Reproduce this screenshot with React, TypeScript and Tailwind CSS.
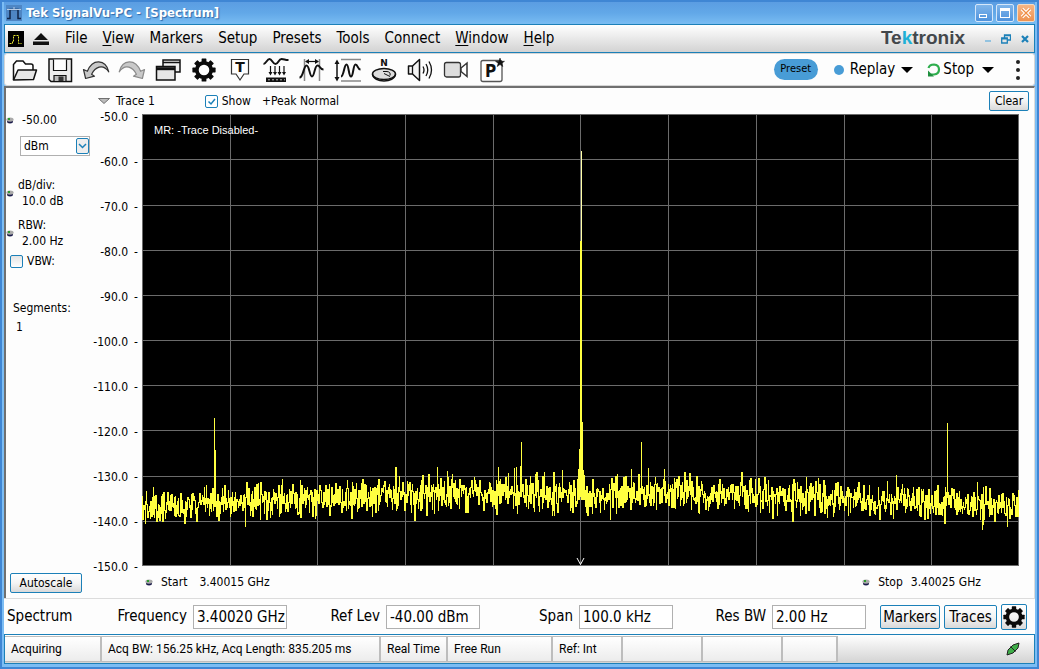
import React from 'react';

const FONT = "font-['DejaVu_Sans_Condensed','DejaVu_Sans',sans-serif]";
const XP_BUTTON =
    'rounded-[2px] border border-[#1c80b8] bg-gradient-to-b from-white via-[#f4f4f4] to-[#d9d9d9] text-black';

/* ---------- Trace data ---------- */

const PLOT_W = 877;
const PLOT_H = 452;
const V_LINES = [88, 175, 263, 351, 438, 526, 614, 702, 789];
const H_LINES = [45, 91, 136, 181, 226, 271, 316, 362, 407];
const AXIS = ['-50.0', '-60.0', '-70.0', '-80.0', '-90.0', '-100.0', '-110.0', '-120.0', '-130.0', '-140.0', '-150.0'];

// column -> top of the spur
const SPURS: Record<number, number> = {
    72: 304,
    73: 336,
    295: 353,
    305: 357,
    310: 360,
    356: 353,
    372: 354,
    378: 352,
    379: 328,
    402: 358,
    436: 355,
    437: 335,
    438: 127,
    439: 37,
    440: 308,
    441: 356,
    442: 361,
    475: 360,
    499: 328,
    506: 354,
    522: 355,
    805: 309,
};

const floorAt = (x: number) => {
    const d = Math.abs(x - 438) / 438;
    const dip = 5 * Math.exp(-((x - 438) ** 2) / 2200);
    return 377 + 16 * Math.pow(d, 1.7) + dip;
};

const buildTrace = () => {
    let seed = 20417;
    const rand = () => {
        seed = (seed * 1664525 + 1013904223) % 4294967296;
        return seed / 4294967296;
    };
    const sample = (x: number) => {
        const g = rand() + rand() + rand() + rand() - 2;
        return floorAt(x) + g * 15;
    };
    let last = floorAt(0);
    let d = '';
    for (let x = 0; x < PLOT_W; x++) {
        const a = sample(x);
        const b = sample(x);
        let top = Math.round(Math.min(a, b, last));
        let bottom = Math.round(Math.max(a, b, last)) + 1;
        if (SPURS[x] !== undefined) {
            top = SPURS[x];
            bottom = Math.min(bottom, Math.round(floorAt(x)) + 4);
        }
        d += `M${x + 0.5} ${top}V${bottom}`;
        last = b;
    }
    return d;
};

const TRACE = buildTrace();

/* ---------- Icons ---------- */

const Icon: React.FC<{ children: React.ReactNode }> = ({ children }) => (
    <svg viewBox="0 0 28 28" className="size-7" fill="none" stroke="#111" strokeWidth="1.5">
        {children}
    </svg>
);

const GearShape = () => (
    <g stroke="none" fill="#0a0a0a">
        {[0, 45, 90, 135, 180, 225, 270, 315].map((a) => (
            <rect key={a} x="11.6" y="2.4" width="4.8" height="5" rx="0.6" transform={`rotate(${a} 14 14)`} />
        ))}
        <circle cx="14" cy="14" r="7.2" fill="none" stroke="#0a0a0a" strokeWidth="3.8" />
    </g>
);

const ArrowShape = ({ dark }: { dark: string }) => (
    <path
        d="M1.5 13.5L3.6 22.5 12.5 20.2 9.6 18.2C13 11.5 20.5 7 26.8 15.8 23.5 3 10.5 2.4 5.4 15.3z"
        fill="#c9c9c9"
        stroke={dark}
        strokeWidth="1.2"
        strokeLinejoin="round"
    />
);

const TOOLS: { name: string; art: React.ReactNode }[] = [
    {
        name: 'Open',
        art: (
            <>
                <path d="M3.5 24V8.5L6.5 5H13l2.5 3H21q2 0 2 2v4" fill="#fff" />
                <path d="M3.5 24L8 14h18.5L23.5 23.5z" fill="#e6e6e6" strokeLinejoin="round" />
            </>
        ),
    },
    {
        name: 'Save',
        art: (
            <>
                <path d="M3 3h22.5v22.5H5L3 23.5z" fill="#ececec" strokeWidth="1.5" />
                <path d="M7.5 3.5v11h13v-11" fill="#fff" strokeWidth="1.2" />
                <path d="M8 25v-5.5h12V25" fill="#bbb" strokeWidth="1.2" />
                <path d="M12.5 20.5h5V25h-5z" fill="#333" stroke="none" />
            </>
        ),
    },
    { name: 'Undo', art: <ArrowShape dark="#333" /> },
    {
        name: 'Redo',
        art: (
            <g transform="translate(28 0) scale(-1 1)">
                <ArrowShape dark="#8a8a8a" />
            </g>
        ),
    },
    {
        name: 'Windows',
        art: (
            <>
                <path d="M9 4h17v12H9z" fill="#eee" />
                <path d="M9 6.5h17" />
                <path d="M2.5 10.5h18.5v13.5H2.5z" fill="#e6e6e6" />
                <path d="M2.5 12.7h18.5" strokeWidth="3" />
            </>
        ),
    },
    { name: 'Settings', art: <GearShape /> },
    {
        name: 'Trigger',
        art: (
            <>
                <path d="M5.5 18V3.5h17V18h-4.5l-4 6-4-6z" fill="#fff" stroke="#333" strokeWidth="1.2" />
                <text x="14" y="15.5" textAnchor="middle" fontSize="14" fontWeight="700" fill="#111" stroke="none" fontFamily="DejaVu Sans">
                    T
                </text>
            </>
        ),
    },
    {
        name: 'Acquire',
        art: (
            <>
                <path d="M1.5 8C4 8 5 3 7.500 3s3 5 6 5 3-5 6-5 3 1 7 1" strokeWidth="2" />
                <path d="M8.5 10v8M13 10v8M17.5 10v8M22 10v8" strokeWidth="1.2" />
                <path d="M6.5 16h4l-2 3.500zM11 16h4l-2 3.500zM15.5 16h4l-2 3.500zM20 16h4l-2 3.500z" fill="#111" stroke="none" />
                <path d="M4 21.5h20V26H4z" fill="#111" stroke="none" />
                <path d="M6 23.8h17" stroke="#bbb" strokeDasharray="2 2" strokeWidth="1" />
            </>
        ),
    },
    {
        name: 'Horizontal',
        art: (
            <>
                <path d="M6.5 3v22M21.5 3v22" stroke="#888" />
                <path d="M8 5.5h12" strokeWidth="1.2" />
                <path d="M7 5.5l4-2.500v5zM21 5.5l-4-2.500v5z" fill="#111" stroke="none" />
                <path d="M1.5 21.5c4 0 4-12 7-12s3 11 5.500 11 2.500-11 5.500-11 2 4 6 4" strokeWidth="2" />
            </>
        ),
    },
    {
        name: 'Vertical',
        art: (
            <>
                <path d="M7 3.5h20M7 25h20" stroke="#888" />
                <path d="M3 6v17" />
                <path d="M3 3.5L.5 8h5zM3 25.5L.5 21h5z" fill="#111" stroke="none" />
                <path d="M7 20.5c3 0 3-12 5.500-12s2 12 4.500 12 2-12 4.500-12 2 5 5 5" strokeWidth="2" />
            </>
        ),
    },
    {
        name: 'Heading',
        art: (
            <>
                <ellipse cx="14" cy="18" rx="11.5" ry="5.5" fill="#ddd" />
                <path d="M2.5 18.5c1 8.500 22 8.500 23 0" />
                <path d="M14 17.5l6 3M13 15.500h4q4 .5 3 4" strokeWidth="1" />
                <text x="14" y="10" textAnchor="middle" fontSize="9" fontWeight="700" fill="#111" stroke="none" fontFamily="DejaVu Sans">
                    N
                </text>
            </>
        ),
    },
    {
        name: 'Audio',
        art: (
            <>
                <path d="M2.5 10h4l7-6.500v21L6.5 18h-4z" fill="#f4f4f4" strokeLinejoin="round" />
                <path d="M6.5 10v8M17 10.5q2 3.500 0 7M20 8q3.500 6 0 12M23 5.5q5 8.500 0 17" strokeWidth="1.3" />
            </>
        ),
    },
    {
        name: 'Record',
        art: (
            <>
                <rect x="2.5" y="6.5" width="16" height="14.5" rx="2" fill="#ddd" stroke="#333" strokeWidth="1.3" />
                <path d="M19 12l6-5v13.500l-6-5z" fill="#fff" stroke="#333" />
            </>
        ),
    },
    {
        name: 'Favorite preset',
        art: (
            <>
                <rect x="3" y="4.5" width="21" height="21" rx="2" fill="#fff" stroke="#555" strokeWidth="1.3" />
                <text x="12.5" y="21" textAnchor="middle" fontSize="17" fontWeight="700" fill="#111" stroke="none" fontFamily="DejaVu Sans Condensed">
                    P
                </text>
                <path d="M22 2l1.1 3.300h3.400l-2.700 2 1 3.300-2.800-2-2.800 2 1-3.300-2.700-2h3.400z" fill="#111" stroke="#111" strokeWidth=".5" />
            </>
        ),
    },
];

const Knob = () => (
    <svg viewBox="0 0 8 8" className="size-2 shrink-0">
        <ellipse cx="4" cy="5.3" rx="3" ry="2.2" fill="#1b1b4a" />
        <ellipse cx="4" cy="3.6" rx="3.6" ry="2.2" fill="#aaa" />
        <path d="M2 2h2v2H2z" fill="#2d9a2d" />
    </svg>
);

const Caret = () => (
    <svg viewBox="0 0 12 6" className="h-1.5 w-3">
        <path d="M0 0h12L6 6z" fill="#000" />
    </svg>
);

/* ---------- Window parts ---------- */

const TitleBar = () => (
    <header className="flex h-[22px] items-center bg-gradient-to-b from-[#5b9de2] via-[#62a8e8] to-[#79bcf2] pl-0.5">
        <svg viewBox="0 0 16 16" className="size-4" fill="none">
            <rect width="16" height="16" fill="#4e86c4" />
            <path d="M1 13.5h3v-9h8v9h3" stroke="#0f2548" strokeWidth="1.5" />
            <path d="M1 4.5h14M8 2v3" stroke="#b9cde5" />
        </svg>
        <h1 className="ml-1 flex-1 text-[13px] font-bold text-white [text-shadow:1px_1px_1px_#2f68a8]">
            Tek SignalVu-PC - [Spectrum]
        </h1>
        <div className="flex gap-[3px]">
            <button aria-label="Minimize" className="flex h-[18px] w-[18px] items-end rounded-[2px] border border-[#d5e7fa] bg-gradient-to-b from-[#7fb5ea] to-[#4f93dd] p-[3px]">
                <span className="h-1 w-2 border border-white" />
            </button>
            <button aria-label="Maximize" className="flex h-[18px] w-[18px] items-center justify-center rounded-[2px] border border-[#d5e7fa] bg-gradient-to-b from-[#7fb5ea] to-[#4f93dd]">
                <span className="h-2.5 w-2.5 border border-t-[3px] border-white" />
            </button>
            <button aria-label="Close" className="flex h-[18px] w-[18px] items-center justify-center rounded-[2px] border border-[#f3dcc6] bg-gradient-to-b from-[#f6b584] to-[#ee9250]">
                <svg viewBox="0 0 12 12" className="size-3">
                    <path d="M2 2l8 8M10 2l-8 8" stroke="#fff" strokeWidth="3.5" />
                    <path d="M2 2l8 8M10 2l-8 8" stroke="#f08a40" strokeWidth="1.2" />
                </svg>
            </button>
        </div>
    </header>
);

const MENU = [
    { text: 'File' },
    { text: 'View', key: true },
    { text: 'Markers' },
    { text: 'Setup' },
    { text: 'Presets' },
    { text: 'Tools' },
    { text: 'Connect' },
    { text: 'Window', key: true },
    { text: 'Help', key: true },
];

const MenuBar = () => (
    <nav className="flex h-[29px] items-center border border-[#1c80b8] bg-gradient-to-b from-white to-[#d3d3d3] pr-[5px] pl-[3px]">
        <svg viewBox="0 0 16 16" className="size-4" fill="none">
            <rect width="16" height="16" fill="#000" />
            <path d="M1.5 12.5h3v-2h1v-6h5v8h3" stroke="#e6e632" strokeDasharray="2 1" />
        </svg>
        <svg viewBox="0 0 16 12" className="ml-[9px] h-3 w-4">
            <path d="M8 0l7 7H1zM0 8.5h16V12H0z" fill="#111" />
        </svg>
        <div className="ml-4 flex gap-[15px] text-[15px]">
            {MENU.map((m) => (
                <button key={m.text}>
                    {m.key ? <span className="underline underline-offset-2">{m.text[0]}</span> : m.text[0]}
                    {m.text.slice(1)}
                </button>
            ))}
        </div>
        <div className="ml-auto font-['Liberation_Sans',sans-serif] text-[19px] font-bold text-[#43474b]">
            Te<span className="text-[#1fb0d6]">k</span>tronix
        </div>
        <div className="ml-5 flex items-center gap-2.5 text-[#1c80b8]">
            <button aria-label="Minimize document" className="mt-1 h-0.5 w-1.5 bg-[#93c3e0]" />
            <button aria-label="Restore document">
                <svg viewBox="0 0 10 10" className="size-2.5" fill="none" stroke="currentColor">
                    <path d="M3.5 4V1h6v5h-3M3.5 1.5h6" strokeWidth="1.3" />
                    <path d="M.7 4h5.6v5H.7zM.7 4.800h5.600" strokeWidth="1.3" />
                </svg>
            </button>
            <button aria-label="Close document">
                <svg viewBox="0 0 8 8" className="size-2" stroke="currentColor" strokeWidth="2.2">
                    <path d="M1 1l6 6M7 1L1 7" />
                </svg>
            </button>
        </div>
    </nav>
);

const Toolbar = () => (
    <div className="flex h-[33px] items-center rounded-[3px] border border-[#d5d5d5] bg-[#fdfdfd] pl-px">
        {TOOLS.map((t) => (
            <button key={t.name} aria-label={t.name} className="flex w-9 shrink-0 justify-center">
                <Icon>{t.art}</Icon>
            </button>
        ))}
        <div className="ml-auto flex items-center pr-3.5 text-[15px]">
            <button className="h-[21px] w-11 rounded-full bg-[#489cd6] text-[11px]">Preset</button>
            <button className="ml-4 flex items-center">
                <span className="mr-1.5 size-2.5 rounded-full bg-[#489cd6]" />
                Replay
                <span className="ml-1.5">
                    <Caret />
                </span>
            </button>
            <button className="ml-3.5 flex items-center">
                <svg viewBox="0 0 14 14" className="mr-0.5 size-3.5" fill="none">
                    <path d="M1.500 5Q2.500 1.500 7 1.500q5 .5 5 5T7 11.500H4" stroke="#2fae4e" strokeWidth="2.2" />
                    <path d="M1 7.500v6h6z" fill="#1e8f3e" />
                </svg>
                Stop
                <span className="ml-2">
                    <Caret />
                </span>
            </button>
            <button aria-label="More" className="ml-[22px] flex flex-col gap-1">
                <span className="size-1 rounded-full bg-[#222]" />
                <span className="size-1 rounded-full bg-[#222]" />
                <span className="size-1 rounded-full bg-[#222]" />
            </button>
        </div>
    </div>
);

const Sidebar = () => (
    <aside className="flex w-[84px] shrink-0 flex-col">
        <div className="mt-6 flex h-4 items-center gap-2">
            <Knob />
            <span>-50.00</span>
        </div>
        <div className="relative mt-2 ml-3.5 h-5 w-[70px]">
            <select aria-label="Units" defaultValue="dBm" className="h-full w-full appearance-none border border-[#b0b0b0] bg-white pl-[3px]">
                <option>dBm</option>
            </select>
            <svg viewBox="0 0 13 16" className="pointer-events-none absolute top-0.5 right-px h-4 w-[13px]" fill="none">
                <rect x=".5" y=".5" width="12" height="15" rx="1.5" fill="#eee" stroke="#1c80b8" />
                <path d="M3 6l3.500 3.500L10 6" stroke="#1c80b8" strokeWidth="1.5" />
            </svg>
        </div>
        <div className="mt-[21px] flex items-center gap-1 leading-4">
            <Knob />
            <div>
                <p>dB/div:</p>
                <p className="pl-1">10.0 dB</p>
            </div>
        </div>
        <div className="mt-2 flex items-center gap-1 leading-4">
            <Knob />
            <div>
                <p>RBW:</p>
                <p className="pl-1">2.00 Hz</p>
            </div>
        </div>
        <label className="mt-1 ml-1 flex h-4 items-center gap-1">
            <input type="checkbox" className="size-[13px] appearance-none rounded-[2px] border border-[#1c80b8] bg-gradient-to-b from-[#e4e4e4] to-white" />
            VBW:
        </label>
        <div className="mt-[30px] ml-[7px] leading-[19px]">
            <p>Segments:</p>
            <p className="pl-[3px]">1</p>
        </div>
        <button className={`mt-auto mb-[5px] ml-1 h-5 w-[72px] leading-4 ${XP_BUTTON}`}>Autoscale</button>
    </aside>
);

const Plot = () => (
    <section className="flex min-w-0 flex-1 flex-col pr-[15px]">
        <div className="flex h-[26px] items-center pl-2">
            <button aria-label="Trace menu">
                <svg viewBox="0 0 12 6" className="h-1.5 w-3">
                    <path d="M.5.5h11L6 5.5z" fill="#bbb" stroke="#555" strokeWidth=".8" />
                </svg>
            </button>
            <span className="ml-1.5">Trace 1</span>
            <label className="ml-[50px] flex items-center gap-1">
                <span className="relative flex size-[13px]">
                    <input type="checkbox" defaultChecked className="size-[13px] appearance-none rounded-[2px] border border-[#1c80b8] bg-white" />
                    <svg viewBox="0 0 13 13" className="pointer-events-none absolute inset-0" fill="none">
                        <path d="M3.5 6.5L6 9l4-5" stroke="#1c80b8" strokeWidth="1.5" />
                    </svg>
                </span>
                Show
            </label>
            <span className="ml-[11px]">+Peak Normal</span>
            <button className={`-mr-2.5 ml-auto h-5 w-10 leading-4 ${XP_BUTTON}`}>Clear</button>
        </div>
        <div className="flex">
            <ul className="flex h-[456px] w-[52px] shrink-0 flex-col justify-between pr-1 leading-[6px]">
                {AXIS.map((v) => (
                    <li key={v} className="flex justify-end gap-1.5">
                        <span>{v}</span>
                        <span>-</span>
                    </li>
                ))}
            </ul>
            <div className="relative min-w-0 flex-1">
                <svg
                    viewBox={`0 0 ${PLOT_W} ${PLOT_H}`}
                    preserveAspectRatio="none"
                    shapeRendering="crispEdges"
                    className="block h-[452px] w-full"
                    fill="none"
                >
                    <rect width={PLOT_W} height={PLOT_H} fill="#000" />
                    <g stroke="#6b6b6b">
                        <rect x="0.5" y="0.5" width={PLOT_W - 1} height={PLOT_H - 1} />
                        {V_LINES.map((x) => (
                            <path key={x} d={`M${x + 0.5} 0V${PLOT_H}`} />
                        ))}
                        {H_LINES.map((y) => (
                            <path key={y} d={`M0 ${y + 0.5}H${PLOT_W}`} />
                        ))}
                    </g>
                    <path d={TRACE} stroke="#ffff40" />
                    <path d="M439.5 37V127" stroke="#ffffa8" />
                    <path d="M435 444l3.500 6.500L442 444" stroke="#fff" shapeRendering="auto" />
                </svg>
                <p className="absolute top-2 left-3 font-['Liberation_Sans',sans-serif] text-[11px] leading-4 text-white">
                    MR: -Trace Disabled-
                </p>
            </div>
        </div>
        <div className="mt-0.5 flex h-5 items-center justify-between pr-[38px] pl-[55px]">
            <div className="flex items-center">
                <Knob />
                <span className="ml-2">Start</span>
                <span className="ml-3">3.40015 GHz</span>
            </div>
            <div className="flex items-center">
                <Knob />
                <span className="ml-2">Stop</span>
                <span className="ml-2">3.40025 GHz</span>
            </div>
        </div>
    </section>
);

const FIELDS = [
    { id: 'frequency', label: 'Frequency', value: '3.40020 GHz' },
    { id: 'ref-lev', label: 'Ref Lev', value: '-40.00 dBm' },
    { id: 'span', label: 'Span', value: '100.0 kHz' },
    { id: 'res-bw', label: 'Res BW', value: '2.00 Hz' },
];

const SettingsBar = () => (
    <div className="grid h-9 grid-cols-[87px_repeat(4,1fr)_auto] items-center border-t border-[#dcdcdc] bg-[#fdfdfd] pr-2 pl-[3px] text-[15px]">
        <span>Spectrum</span>
        {FIELDS.map((f) => (
            <div key={f.id} className="flex items-center justify-end gap-1.5">
                <label htmlFor={f.id}>{f.label}</label>
                <input id={f.id} defaultValue={f.value} className="h-6 w-[94px] border border-[#b0b0b0] bg-white pl-[3px]" />
            </div>
        ))}
        <div className="flex items-center gap-1 pl-3.5">
            <button className={`h-6 w-[60px] leading-5 ${XP_BUTTON}`}>Markers</button>
            <button className={`h-6 w-[53px] leading-5 ${XP_BUTTON}`}>Traces</button>
            <button aria-label="Spectrum settings" className={`flex size-[26px] items-center justify-center ${XP_BUTTON}`}>
                <svg viewBox="2 2 24 24" className="size-[22px]">
                    <GearShape />
                </svg>
            </button>
        </div>
    </div>
);

const STATUS = [
    { text: 'Acquiring', width: 'w-[97px]' },
    { text: 'Acq BW: 156.25 kHz, Acq Length: 835.205 ms', width: 'w-[279px]' },
    { text: 'Real Time', width: 'w-[67px]' },
    { text: 'Free Run', width: 'w-[105px]' },
    { text: 'Ref: Int', width: 'w-[70px]' },
    { text: '', width: 'w-[80px]' },
    { text: '', width: 'w-[80px]' },
    { text: '', width: 'w-[55px]' },
];

const StatusBar = () => (
    <footer className="flex h-[30px] items-center border border-[#1c80b8] bg-gradient-to-b from-white to-[#d3d3d3] py-px font-['Roboto',sans-serif] text-[12px]">
        {STATUS.map((s, i) => (
            <div
                key={i}
                className={`flex h-full shrink-0 items-center border-y border-r-2 border-[#bdbdbd] bg-gradient-to-b from-white to-[#ececec] pl-1.5 whitespace-nowrap ${s.width}`}
            >
                {s.text}
            </div>
        ))}
        <svg viewBox="0 0 14 14" className="mr-3.5 ml-auto size-3.5">
            <path d="M1 13l1-5 5-5 6-2-1 5-5 5z" fill="#3fae49" stroke="#222" />
            <path d="M4.5 4.5l5 5" stroke="#222" />
        </svg>
    </footer>
);

const App: React.FC = () => {
    return (
        <div className={`flex min-h-screen flex-col border-2 border-[#3f86d4] bg-[#7cbdf4] px-0.5 pb-[3px] text-[12px] text-black ${FONT}`}>
            <TitleBar />
            <MenuBar />
            <Toolbar />
            <main className="flex flex-1 border-t-2 border-r border-l-2 border-t-[#707070] border-r-[#dcdcdc] border-l-[#707070] bg-[#fdfdfd]">
                <Sidebar />
                <Plot />
            </main>
            <SettingsBar />
            <StatusBar />
        </div>
    );
};

export default App;
